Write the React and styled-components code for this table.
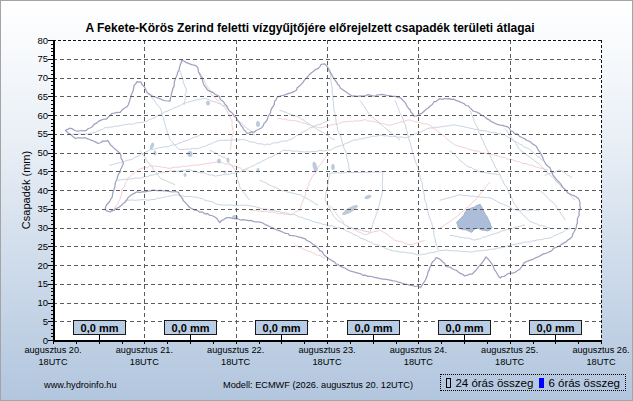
import React from 'react';
import styled, { createGlobalStyle } from 'styled-components';

const GlobalStyle = createGlobalStyle`
  html, body {
    margin: 0;
    padding: 0;
    background: #ffffff;
  }
  body {
    font-family: "Liberation Sans", Arial, sans-serif;
  }
`;

const Frame = styled.div`
  width: 633px;
  height: 401px;
  box-sizing: border-box;
  border: 1px solid #a4a4a4;
  background: linear-gradient(to bottom, #ffffff 0%, #e9eff6 35%, #b2c6de 100%);
  display: flex;
  flex-direction: column;
  overflow: hidden;
`;

const Title = styled.h1`
  margin: 0;
  height: 35px;
  box-sizing: border-box;
  padding: 20px 13px 0 0;
  font-size: 12px;
  line-height: 14px;
  font-weight: bold;
  text-align: center;
  color: #000;
  white-space: nowrap;
`;

const ChartRow = styled.div`
  display: flex;
  height: 334px;
`;

const AxisTitleColumn = styled.div`
  width: 35px;
  box-sizing: border-box;
  padding: 0 0 26px 15px;
  display: flex;
  align-items: center;
  justify-content: center;
`;

const AxisTitle = styled.span`
  display: block;
  transform: rotate(-90deg);
  white-space: nowrap;
  font-size: 11px;
  line-height: 12px;
  color: #000;
`;

const ChartSvg = styled.svg`
  display: block;
  flex: none;
  overflow: visible;
  font-family: "Liberation Sans", Arial, sans-serif;
`;

const Footer = styled.div`
  flex: 1;
  display: grid;
  grid-template-columns: 222px 1fr auto;
  align-items: start;
`;

const FooterText = styled.div`
  padding-top: 10px;
  padding-left: ${props => props.indent || 0}px;
  font-size: 9.2px;
  line-height: 11px;
  color: #000;
  white-space: nowrap;
`;

const LegendBox = styled.div`
  margin: 4px 6px 0 0;
  height: 17px;
  box-sizing: border-box;
  border: 1px dotted #000;
  padding: 0 5px 0 5px;
  display: flex;
  align-items: center;
  gap: 4px;
  font-size: 11.5px;
  color: #000;
  white-space: nowrap;
`;

const Swatch = styled.span`
  display: inline-block;
  width: 5px;
  height: 10px;
  box-sizing: border-box;
  border: 1px solid ${props => (props.filled ? '#0000ff' : '#000')};
  background: ${props => (props.filled ? '#0000ff' : 'transparent')};
`;

const LegendLabel = styled.span`
  margin-right: ${props => props.spaced ? 2 : 0}px;
`;

// plot geometry (page coordinates, svg uses the same through viewBox)
const LEFT = 53;
const RIGHT = 601;
const TOP = 40;
const BOTTOM = 340;
const DAY = (RIGHT - LEFT) / 6;
const yOf = v => BOTTOM - v * 3.75;

// jagged line from a rough list of points, so borders look like real map lines
const jag = (pts, amount = 0.5, closed = false) => {
  const out = [];
  let seed = 1;
  const list = closed ? [...pts, pts[0]] : pts;
  for (let i = 0; i < list.length - 1; i++) {
    const [x1, y1] = list[i];
    const [x2, y2] = list[i + 1];
    const len = Math.hypot(x2 - x1, y2 - y1);
    const steps = Math.max(1, Math.round(len / 2.5));
    for (let s = 0; s < steps; s++) {
      const t = s / steps;
      seed += 1;
      const nx = Math.sin(seed * 12.9898) * 43758.5453;
      const ny = Math.sin(seed * 78.233) * 12345.678;
      const dx = (nx - Math.floor(nx) - 0.5) * amount * 2;
      const dy = (ny - Math.floor(ny) - 0.5) * amount * 2;
      out.push([x1 + (x2 - x1) * t + dx, y1 + (y2 - y1) * t + dy]);
    }
  }
  if (!closed) out.push(list[list.length - 1]);
  return 'M' + out.map(p => p[0].toFixed(1) + ',' + p[1].toFixed(1)).join('L') + (closed ? 'Z' : '');
};

const outline = [
  [66,130],[70,128],[77,131],[84,131],[90,128],[96,123],[101,120],[106,119],[112,114],[120,112],[127,107],[130,100],[132,93],[134,85],[137,82],[141,82],[144,87],[148,93],[153,96],[158,98],[164,101],[170,101],[172,93],[174,86],[176,78],[179,70],[182,60],[186,62],[190,64],[197,66],[199,72],[202,78],[204,85],[207,90],[213,93],[219,97],[225,104],[231,112],[236,118],[241,125],[247,133],[254,132],[260,129],[266,122],[270,113],[274,104],[277,97],[284,95],[291,93],[296,90],[301,84],[306,78],[310,74],[314,71],[318,68],[321,65],[325,64],[328,68],[331,73],[335,80],[339,86],[345,92],[352,96],[360,96],[368,95],[376,96],[382,94],[390,96],[398,97],[404,101],[407,106],[410,110],[414,116],[418,116],[423,112],[428,108],[434,102],[440,99],[449,99],[456,100],[462,103],[468,106],[473,111],[479,113],[484,116],[489,120],[495,123],[500,125],[507,127],[513,132],[519,136],[525,139],[531,142],[536,147],[540,152],[543,158],[546,164],[550,168],[553,175],[558,181],[563,187],[568,193],[574,196],[578,198],[580,203],[580,210],[578,218],[576,228],[572,236],[566,242],[558,246],[550,251],[543,254],[536,258],[530,260],[524,263],[520,269],[515,272],[508,274],[500,278],[496,272],[493,266],[490,261],[486,257],[482,263],[478,268],[472,274],[465,276],[458,272],[452,268],[446,266],[441,260],[436,258],[432,264],[428,272],[425,280],[421,287],[410,285],[398,282],[385,279],[372,277],[363,275],[350,271],[340,266],[330,260],[322,252],[315,246],[307,240],[298,237],[290,235],[281,231],[273,228],[263,223],[253,221],[243,220],[232,218],[225,218],[220,222],[215,217],[207,214],[200,212],[192,209],[186,204],[182,199],[178,192],[168,191],[155,190],[145,192],[137,192],[130,196],[125,202],[118,208],[110,212],[105,210],[108,203],[112,197],[115,187],[117,178],[120,172],[123,163],[120,153],[112,147],[108,140],[98,143],[85,138],[75,138],[68,133]
];

const rivers = [
  [[72,134],[90,134],[105,128],[125,125],[145,122],[165,112],[185,103],[205,98],[225,106],[240,122],[255,135]],
  [[150,95],[160,108],[165,125],[170,140],[180,150],[200,148],[220,140],[245,140],[265,145],[290,140],[310,128],[330,120]],
  [[110,165],[130,160],[150,150],[175,145],[200,135]],
  [[118,180],[140,178],[165,172],[190,170],[215,176],[240,172],[265,160],[285,150],[305,152],[330,150],[355,140],[380,135],[405,138],[430,128],[455,125],[480,130],[505,135],[530,150],[545,162]],
  [[125,200],[150,200],[175,195],[200,198],[220,205],[245,205],[270,210],[295,215],[315,222],[340,228],[365,240],[390,250],[420,255],[445,250],[470,252],[500,248],[525,242],[550,238],[570,228]],
  [[330,68],[332,90],[334,110],[338,130],[345,150],[350,172]],
  [[280,110],[300,118],[318,130],[335,140]],
  [[395,100],[405,125],[412,150],[420,175],[425,200],[432,225],[438,250]],
  [[470,110],[480,135],[492,160],[505,185],[515,205],[530,222],[550,228]],
  [[505,128],[520,150],[540,165],[560,185],[575,200]],
  [[440,200],[460,195],[490,198],[515,210],[540,210]],
  [[450,235],[475,240],[500,232],[525,225]],
  [[210,150],[225,158],[235,170],[240,188],[250,200]],
  [[180,70],[186,90],[184,105]],
  [[140,150],[150,165],[160,178],[175,185]],
  [[260,180],[280,190],[300,195],[318,205]],
  [[540,190],[555,205],[565,220]],
  [[360,100],[370,115],[385,128],[400,140]],
  [[450,150],[465,165],[480,172],[500,175]],
  [[545,175],[560,170],[572,178]],
];

const subArea = [[330,173],[383,172],[382,195],[376,215],[370,232],[350,228],[335,218],[325,200]];

const roads = [
  [[112,212],[120,200],[122,190],[128,178],[138,170],[150,166],[170,168],[195,165],[220,162],[232,165],[245,170],[255,172]],
  [[200,72],[205,82],[212,95],[225,108],[232,120],[233,132],[230,150]],
  [[327,155],[318,168],[310,180],[305,195],[300,210],[290,215],[270,212],[250,210]],
  [[278,118],[300,122],[320,128],[345,122],[365,120],[390,125],[410,120],[430,125],[455,145],[480,152],[505,158],[530,165],[548,170]],
  [[330,205],[345,225],[365,235],[380,230],[395,240],[410,245],[425,240]],
  [[440,228],[455,218],[470,205],[480,195],[490,182]],
  [[295,245],[310,252],[325,258]],
];

const lakes = [
  [152,146,1.8,3.5,20],[155,153,1.5,2.5,0],[190,154,2.5,3,0],[208,103,2,2.5,0],[219,161,2,2.5,0],
  [228,160,1.5,2.5,0],[225,172,1.5,1.5,0],[315,167,2.2,5.5,-15],[333,167,1.8,3,0],[350,210,9,2.5,-30],
  [368,197,3.5,1.8,-20],[235,217,3,2,0],[258,124,2,3,0],[258,170,1.5,2,0],[185,175,1.5,2,0],
];

const basin = [[457,222],[462,217],[467,210],[474,207],[480,204],[483,210],[487,217],[490,223],[492,228],[488,231],[481,230],[476,228],[472,232],[465,230],[458,228]];

const yValues = Array.from({ length: 17 }, (_, i) => i * 5);
const days = [20, 21, 22, 23, 24, 25, 26];

const Chart = () => {
  const gridV = [1, 2, 3, 4, 5].map(i => Math.round(LEFT + DAY * i) + 0.5);
  const gridH = yValues.slice(1, 16).map(v => Math.round(yOf(v)) + 0.5);
  const minorY = Array.from({ length: 81 }, (_, i) => Math.round(yOf(i)) + 0.5);
  const minorX = Array.from({ length: 25 }, (_, i) => Math.round(LEFT + (DAY / 4) * i) + 0.5);

  return (
    <ChartSvg width="596" height="334" viewBox="36 36 596 334">
      <rect x={LEFT} y={TOP} width={RIGHT - LEFT} height={BOTTOM - TOP} fill="#ffffff" />

      {/* map */}
      <g fill="none" strokeLinejoin="round">
        {roads.map((r, i) => (
          <path key={'r' + i} d={jag(r, 0.5)} stroke="#f4cfd2" strokeWidth="1" />
        ))}
        {rivers.map((r, i) => (
          <path key={'v' + i} d={jag(r, 0.5)} stroke="#c7d4e0" strokeWidth="1" />
        ))}
        <path d={jag(subArea, 0.4, true)} stroke="#c7d4e0" strokeWidth="1" />
        {lakes.map(([cx, cy, rx, ry, rot], i) => (
          <ellipse key={'l' + i} cx={cx} cy={cy} rx={rx} ry={ry} fill="#bccbdc" transform={`rotate(${rot} ${cx} ${cy})`} />
        ))}
        <path d={jag(basin, 0.4, true)} fill="#abbdd9" stroke="#a3b4d0" strokeWidth="1" />
        <path d={jag(outline, 0.55, true)} stroke="#a0a1c0" strokeWidth="1.25" />
      </g>

      {/* grid */}
      <g stroke="#5c5c5c" strokeWidth="1" strokeDasharray="4 3" shapeRendering="crispEdges">
        {gridV.map(x => <line key={'gx' + x} x1={x} y1={TOP} x2={x} y2={BOTTOM} />)}
        {gridH.map(y => <line key={'gy' + y} x1={LEFT} y1={y} x2={RIGHT} y2={y} />)}
      </g>
      <g stroke="#111" strokeWidth="1" strokeDasharray="3 2" shapeRendering="crispEdges">
        <line x1={LEFT} y1={TOP + 0.5} x2={RIGHT + 1} y2={TOP + 0.5} />
        <line x1={RIGHT + 0.5} y1={TOP} x2={RIGHT + 0.5} y2={BOTTOM} />
      </g>

      {/* axes */}
      <g stroke="#000" strokeWidth="1" shapeRendering="crispEdges">
        {minorY.map(y => <line key={'my' + y} x1={LEFT - 2} y1={y} x2={LEFT} y2={y} />)}
        {gridH.concat([TOP + 0.5, BOTTOM + 0.5]).map(y => (
          <line key={'ty' + y} x1={LEFT - 5} y1={y} x2={LEFT} y2={y} />
        ))}
        {minorX.map(x => <line key={'mx' + x} x1={x} y1={BOTTOM + 2} x2={x} y2={BOTTOM + 4} />)}
      </g>
      <rect x={LEFT} y={TOP} width="2" height={BOTTOM - TOP + 2} fill="#000" />
      <rect x={LEFT} y={BOTTOM} width={RIGHT - LEFT + 1} height="2" fill="#000" />

      {/* y labels */}
      <g fontSize="9.5" fill="#000" textAnchor="end">
        {yValues.map(v => (
          <text key={'yl' + v} x={LEFT - 5} y={yOf(v) + 3.5}>{v}</text>
        ))}
      </g>

      {/* x labels */}
      <g fontSize="9.2" fill="#000" textAnchor="middle">
        {days.map((d, i) => (
          <g key={'xl' + d}>
            <text x={LEFT + DAY * i} y={353}>augusztus {d}.</text>
            <text x={LEFT + DAY * i} y={365}>18UTC</text>
          </g>
        ))}
      </g>

      {/* daily sums */}
      {[0, 1, 2, 3, 4, 5].map(i => {
        const cx = Math.round(LEFT + DAY * (i + 0.5));
        return (
          <g key={'sum' + i}>
            <line x1={cx + 0.5} y1={335} x2={cx + 0.5} y2={BOTTOM} stroke="#000" strokeWidth="1" shapeRendering="crispEdges" />
            <rect x={cx - 25.5} y={320.5} width="52" height="14" fill="#b9cde5" stroke="#1a1a1a" strokeWidth="1" shapeRendering="crispEdges" />
            <text x={cx + 0.5} y={332} fontSize="11" fontWeight="bold" textAnchor="middle" fill="#000">0,0 mm</text>
          </g>
        );
      })}
    </ChartSvg>
  );
};

export default function App() {
  return (
    <>
      <GlobalStyle />
      <Frame>
        <Title>A Fekete-Körös Zerind feletti vízgyűjtőjére előrejelzett csapadék területi átlagai</Title>
        <ChartRow>
          <AxisTitleColumn>
            <AxisTitle>Csapadék (mm)</AxisTitle>
          </AxisTitleColumn>
          <Chart />
        </ChartRow>
        <Footer>
          <FooterText indent={43}>www.hydroinfo.hu</FooterText>
          <FooterText>Modell: ECMWF (2026. augusztus 20. 12UTC)</FooterText>
          <LegendBox>
            <Swatch />
            <LegendLabel spaced>24 órás összeg</LegendLabel>
            <Swatch filled />
            <LegendLabel>6 órás összeg</LegendLabel>
          </LegendBox>
        </Footer>
      </Frame>
    </>
  );
}
